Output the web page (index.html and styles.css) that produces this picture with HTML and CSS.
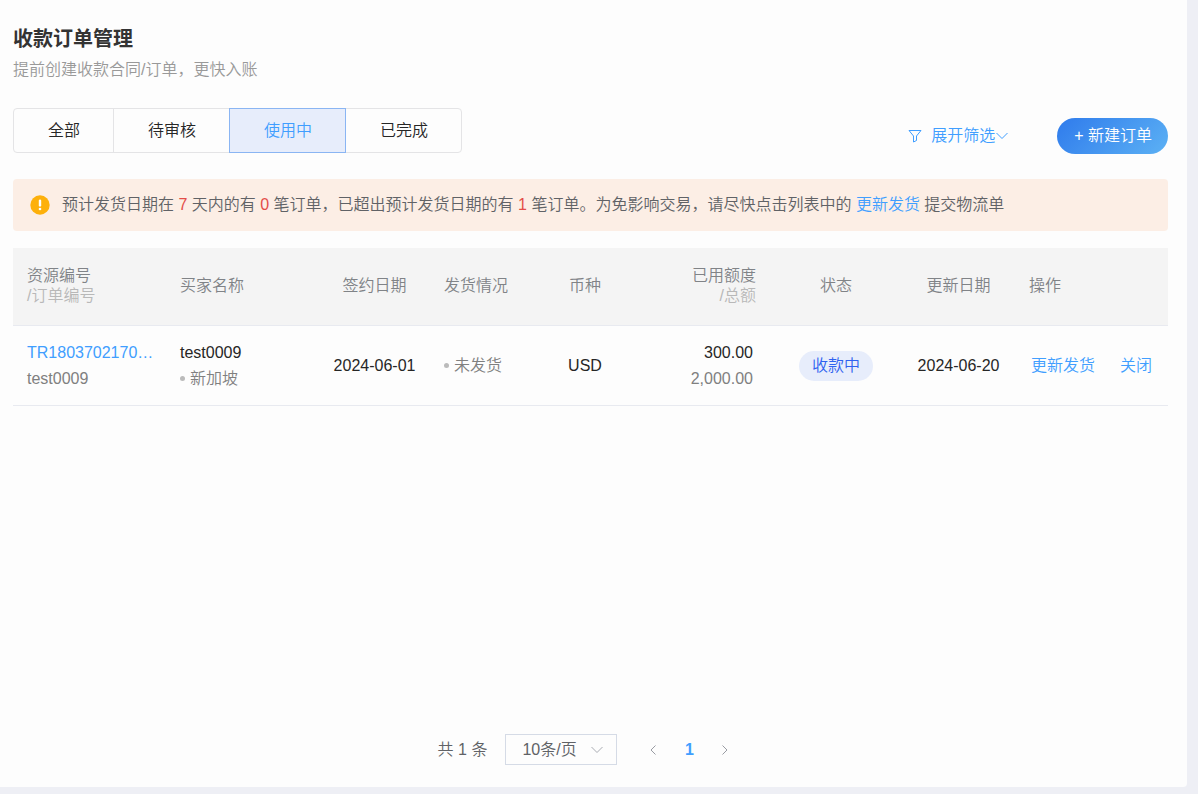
FILE: index.html
```html
<!DOCTYPE html>
<html lang="zh-CN">
<head>
<meta charset="utf-8">
<title>收款订单管理</title>
<link rel="stylesheet" href="styles.css">
</head>
<body>
<main class="card">
  <header class="heading">
    <h1 class="title">收款订单管理</h1>
    <p class="subtitle">提前创建收款合同/订单，更快入账</p>
  </header>

  <div class="toolbar">
    <div class="tabs">
      <button class="tab" type="button">全部</button>
      <button class="tab" type="button">待审核</button>
      <button class="tab tab-active" type="button">使用中</button>
      <button class="tab" type="button">已完成</button>
    </div>
    <div class="tools">
      <button class="filter" type="button">
        <svg class="filter-icon" width="14" height="14" viewBox="0 0 14 14"><path d="M1 1.5H13L8.5 7V11.5L5.5 13V7Z"/></svg>
        <span>展开筛选</span>
        <svg class="filter-arrow" width="12" height="8" viewBox="0 0 12 8"><path d="M0.5 1L6 6.5L11.5 1"/></svg>
      </button>
      <button class="create" type="button">+ 新建订单</button>
    </div>
  </div>

  <div class="notice">
    <svg class="notice-icon" width="20" height="20" viewBox="0 0 20 20"><circle cx="10" cy="10" r="9.7" fill="#fdb00b"/><path d="M10 5.8V10.4" stroke="#fff" stroke-width="2.4" stroke-linecap="round"/><circle cx="10" cy="14" r="1.3" fill="#fff"/></svg>
    <p class="notice-text">预计发货日期在 <span class="count">7</span> 天内的有 <span class="count">0</span> 笔订单，已超出预计发货日期的有 <span class="count">1</span> 笔订单。为免影响交易，请尽快点击列表中的 <a class="link" href="#">更新发货</a> 提交物流单</p>
  </div>

  <table class="orders">
    <colgroup>
      <col class="w-id"><col class="w-buyer"><col class="w-sign"><col class="w-ship"><col class="w-currency"><col class="w-amount"><col class="w-status"><col class="w-update"><col class="w-action">
    </colgroup>
    <thead>
      <tr>
        <th>资源编号<span class="sub">/订单编号</span></th>
        <th>买家名称</th>
        <th class="center">签约日期</th>
        <th>发货情况</th>
        <th class="center">币种</th>
        <th class="right">已用额度<span class="sub">/总额</span></th>
        <th class="center">状态</th>
        <th class="center">更新日期</th>
        <th>操作</th>
      </tr>
    </thead>
    <tbody>
      <tr>
        <td><a class="link order-id" href="#">TR1803702170…</a><div class="muted">test0009</div></td>
        <td><div>test0009</div><div class="muted dotted">新加坡</div></td>
        <td class="center">2024-06-01</td>
        <td><div class="muted dotted">未发货</div></td>
        <td class="center">USD</td>
        <td class="right amount"><div>300.00</div><div class="muted">2,000.00</div></td>
        <td class="center"><span class="badge">收款中</span></td>
        <td class="center">2024-06-20</td>
        <td><div class="actions"><a class="link" href="#">更新发货</a><a class="link" href="#">关闭</a></div></td>
      </tr>
    </tbody>
  </table>

  <nav class="pagination" aria-label="分页">
    <span class="total">共 1 条</span>
    <span class="page-size">
      <select class="size-select" aria-label="每页条数"><option>10条/页</option></select>
      <svg class="size-arrow" width="12" height="8" viewBox="0 0 12 8"><path d="M0.5 1L6 6.5L11.5 1"/></svg>
    </span>
    <span class="pager">
      <button class="page" type="button" aria-label="上一页"><svg width="6" height="10" viewBox="0 0 6 10"><path d="M5.5 0.5L1 5L5.5 9.5"/></svg></button>
      <button class="page page-current" type="button">1</button>
      <button class="page" type="button" aria-label="下一页"><svg width="6" height="10" viewBox="0 0 6 10"><path d="M0.5 0.5L5 5L0.5 9.5"/></svg></button>
    </span>
  </nav>
</main>
</body>
</html>
```
FILE: styles.css
```css
* { box-sizing: border-box; }

body {
  margin: 0;
  padding: 0 11px 7px 0;
  min-height: 100vh;
  display: flex;
  background: #eeeff5;
  color: #262626;
  font: 16px/24px "Liberation Sans", "Noto Sans CJK SC", sans-serif;
  font-weight: 350;
}

button, select { font: inherit; color: inherit; }
button { background: none; border: 0; padding: 0; cursor: pointer; }
h1, p { margin: 0; }
svg { fill: none; stroke: currentColor; }

.card {
  flex: 1;
  min-width: 0;
  display: flex;
  flex-direction: column;
  padding: 24px 19px 22px 13px;
  background: #fdfdfd;
  border-radius: 0 0 4px 0;
}

.title { font-size: 20px; line-height: 30px; font-weight: 700; color: #333; }
.subtitle { margin-top: 4px; color: #999; }

.toolbar { display: flex; justify-content: space-between; margin-top: 26px; }
.tabs { display: flex; height: 45px; }
.tab {
  padding: 1px 33px 0 34px;
  border: 1px solid #e4e4e6;
  margin-right: -1px;
}
.tab:first-child { border-radius: 4px 0 0 4px; }
.tab:last-child { border-radius: 0 4px 4px 0; margin-right: 0; }
.tab-active {
  position: relative;
  background: #e7edfb;
  border-color: #8ab5f3;
  color: #409eff;
}

.tools { display: flex; align-items: center; gap: 49px; margin-top: 10px; }
.filter { display: flex; align-items: center; color: #409eff; }
.filter-icon { margin-right: 9px; }
.filter-arrow { margin-left: 1px; }
.create {
  height: 36px;
  padding: 0 16px 0 17px;
  border-radius: 18px;
  background: linear-gradient(135deg, #2f7bec, #5cb1f4);
  color: #fff;
}

.notice {
  display: flex;
  align-items: center;
  gap: 12px;
  margin-top: 25px;
  padding: 14px 17px;
  border-radius: 4px;
  background: #fceee5;
  color: #606266;
}
.notice-icon { flex: none; stroke: none; }
.count { color: #e34d48; }
.link { color: #409eff; text-decoration: none; }

.orders {
  width: 100%;
  margin-top: 17px;
  table-layout: fixed;
  border-collapse: separate;
  border-spacing: 0;
}
.w-id, .w-buyer, .w-action { width: 153px; }
.w-sign { width: 111px; }
.w-ship { width: 100px; }
.w-currency { width: 110px; }
.w-amount { width: 130px; }
.w-status { width: 132px; }
.w-update { width: 113px; }

.orders th, .orders td {
  padding: 0 14px;
  border-bottom: 1px solid #e8eaf0;
  text-align: left;
  vertical-align: middle;
  white-space: nowrap;
}
.orders th {
  height: 78px;
  padding-bottom: 2px;
  background: #f4f4f4;
  color: #808387;
  font-weight: inherit;
  line-height: 20px;
}
.orders td { height: 80px; line-height: 26px; }
.orders .center { text-align: center; padding-left: 0; padding-right: 0; }
.orders .right { text-align: right; }
.orders .amount { padding-right: 17px; }
.sub { display: block; color: #b8b8b8; }
.muted { color: #808080; }
.order-id { display: block; }
.dotted { display: flex; align-items: center; gap: 5px; }
.dotted::before {
  content: "";
  width: 5px;
  height: 5px;
  border-radius: 50%;
  background: #bbb;
}
.badge {
  display: inline-block;
  padding: 2px 13px;
  border-radius: 16px;
  background: #e7edfb;
  color: #2f62f0;
}
.actions { display: flex; gap: 25px; padding-left: 2px; }

.pagination {
  display: flex;
  justify-content: center;
  align-items: center;
  gap: 18px;
  margin-top: auto;
  color: #606266;
}
.page-size { position: relative; }
.size-select {
  display: block;
  width: 112px;
  height: 31px;
  padding: 0 16px;
  border: 1px solid #d5dbe6;
  border-radius: 0;
  background: transparent;
  appearance: none;
}
.size-arrow {
  position: absolute;
  right: 14px;
  top: 12px;
  color: #a8abb2;
  pointer-events: none;
}
.pager { display: flex; }
.page {
  display: flex;
  align-items: center;
  justify-content: center;
  width: 36px;
  height: 28px;
  color: #999ca3;
}
.page-current { color: #409eff; font-weight: 700; }
```
